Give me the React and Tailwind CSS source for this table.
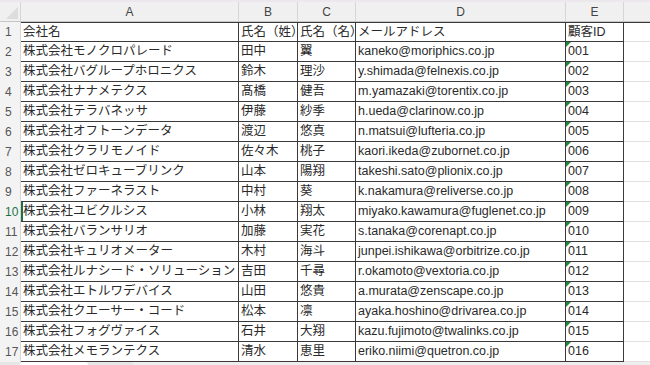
import React from "react";

const rows = [
  ["会社名", "氏名（姓）", "氏名（名）", "メールアドレス", "顧客ID"],
  ["株式会社モノクロパレード", "田中", "翼", "kaneko@moriphics.co.jp", "001"],
  ["株式会社バグループホロニクス", "鈴木", "理沙", "y.shimada@felnexis.co.jp", "002"],
  ["株式会社ナナメテクス", "髙橋", "健吾", "m.yamazaki@torentix.co.jp", "003"],
  ["株式会社テラバネッサ", "伊藤", "紗季", "h.ueda@clarinow.co.jp", "004"],
  ["株式会社オフトーンデータ", "渡辺", "悠真", "n.matsui@lufteria.co.jp", "005"],
  ["株式会社クラリモノイド", "佐々木", "桃子", "kaori.ikeda@zubornet.co.jp", "006"],
  ["株式会社ゼロキューブリンク", "山本", "陽翔", "takeshi.sato@plionix.co.jp", "007"],
  ["株式会社ファーネラスト", "中村", "葵", "k.nakamura@reliverse.co.jp", "008"],
  ["株式会社ユビクルシス", "小林", "翔太", "miyako.kawamura@fuglenet.co.jp", "009"],
  ["株式会社バランサリオ", "加藤", "実花", "s.tanaka@corenapt.co.jp", "010"],
  ["株式会社キュリオメーター", "木村", "海斗", "junpei.ishikawa@orbitrize.co.jp", "011"],
  ["株式会社ルナシード・ソリューション", "吉田", "千尋", "r.okamoto@vextoria.co.jp", "012"],
  ["株式会社エトルワデバイス", "山田", "悠貴", "a.murata@zenscape.co.jp", "013"],
  ["株式会社クエーサー・コード", "松本", "凛", "ayaka.hoshino@drivarea.co.jp", "014"],
  ["株式会社フォグヴァイス", "石井", "大翔", "kazu.fujimoto@twalinks.co.jp", "015"],
  ["株式会社メモランテクス", "清水", "恵里", "eriko.niimi@quetron.co.jp", "016"],
];

const cols = ["A", "B", "C", "D", "E"];
const gridCols = "grid grid-cols-[21px_218px_59px_58px_210px_58px_1fr]";

const Cell = ({ children, first, active, flag }) => (
  <div
    className={
      "relative flex items-center overflow-hidden whitespace-nowrap px-[2px] border-r border-b border-[#3a3a3a] " +
      (first ? "border-t " : "") +
      (active ? "shadow-[inset_2px_0_0_#1e7145]" : "")
    }
  >
    {flag && (
      <span className="absolute left-0 top-0 h-0 w-0 border-t-[5px] border-r-[5px] border-t-[#1e8a3c] border-r-transparent" />
    )}
    {children}
  </div>
);

export default function App() {
  return (
    <div
      className="w-[650px] h-[365px] overflow-hidden bg-white text-[12.5px] text-[#2a2a2a]"
      style={{ fontFamily: '"Liberation Sans","Noto Sans CJK JP",sans-serif' }}
    >
      {/* column header */}
      <div className={gridCols + " h-[22px] bg-[#f0f0f0] border-t-2 border-t-[#ebe7ec] border-b border-b-[#c6c6c6] text-[12px] text-[#444]"}>
        <div className="relative border-r border-[#d6d6d6]">
          <svg className="absolute right-[2px] bottom-[2px]" width="12" height="12" viewBox="0 0 12 12">
            <polygon points="12,0 12,12 0,12" fill="#dcdcdc" />
          </svg>
        </div>
        {cols.map((c) => (
          <div key={c} className="flex items-center justify-center border-r border-[#d6d6d6]">
            {c}
          </div>
        ))}
        <div />
      </div>

      {/* data rows */}
      {rows.map((r, i) => (
        <div key={i} className={gridCols + " h-[20px]"}>
          <div
            className={
              "flex items-center pl-[5px] bg-[#f3f3f3] border-r border-[#d6d6d6] text-[12px] " +
              (i === 9 ? "text-[#1e7145]" : "text-[#555]")
            }
          >
            {i + 1}
          </div>
          {r.map((v, j) => (
            <Cell key={j} first={i === 0} active={i === 9 && j === 0} flag={j === 4 && i > 0}>
              {v}
            </Cell>
          ))}
          <div className={"border-b border-[#e1e1e1] " + (i === 0 ? "border-t border-t-[#3a3a3a]" : "")} />
        </div>
      ))}

      {/* sheet tab strip */}
      <div className="flex h-[3px] bg-[#e6e6e6]">
        <div className="w-[20px]" />
        <div className="w-[68px] bg-white rounded-t" />
        <div className="w-[45px]" />
        <div className="flex-1 bg-[#eeeeee]" />
      </div>
    </div>
  );
}
